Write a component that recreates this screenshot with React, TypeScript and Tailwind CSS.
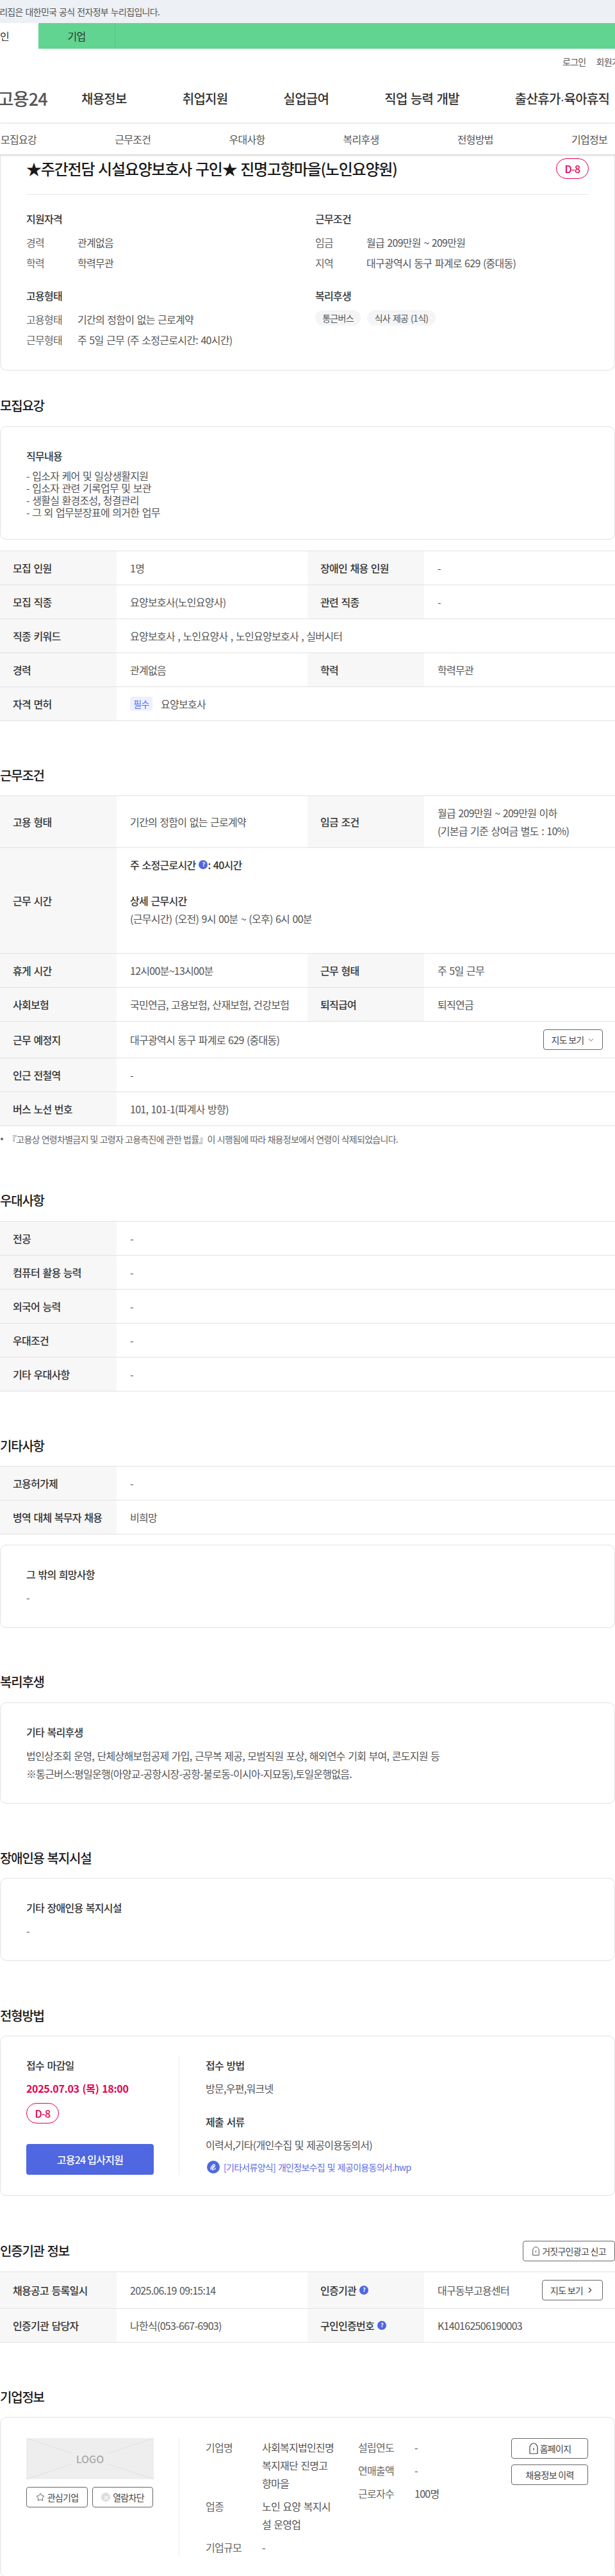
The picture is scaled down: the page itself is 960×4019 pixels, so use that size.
import React from "react";
import { ChevronDown, ChevronRight, Star } from "lucide-react";

const Tbl = ({ children }: { children: React.ReactNode }) => (
  <div className="border-t border-[#e2e2e2]">{children}</div>
);

const Lab = ({ children }: { children: React.ReactNode }) => (
  <div className="w-[182px] shrink-0 self-stretch bg-[#f7f7f7] pl-[20px] flex items-center text-[16px] font-medium text-[#333]">
    {children}
  </div>
);

const Val = ({ children, w, className = "" }: { children?: React.ReactNode; w?: boolean; className?: string }) => (
  <div className={`${w ? "w-[298px] shrink-0" : "flex-1"} pl-[21px] text-[16px] text-[#555] ${className}`}>{children}</div>
);

const Row = ({ children, h = "h-[53px]" }: { children: React.ReactNode; h?: string }) => (
  <div className={`flex items-center border-b border-[#e2e2e2] ${h}`}>{children}</div>
);

const Row1 = ({ l, v }: { l: string; v: string }) => (
  <Row>
    <Lab>{l}</Lab>
    <Val>{v}</Val>
  </Row>
);

const Row2 = ({ a, b, c, d, h }: { a: React.ReactNode; b: React.ReactNode; c: React.ReactNode; d: React.ReactNode; h?: string }) => (
  <Row h={h}>
    <Lab>{a}</Lab>
    <Val w>{b}</Val>
    <Lab>{c}</Lab>
    <Val>{d}</Val>
  </Row>
);

const H2 = ({ children, className }: { children: React.ReactNode; className: string }) => (
  <h2 className={`h-[30px] flex items-center text-[20px] font-medium tracking-[-0.06em] text-[#1a1a1a] whitespace-nowrap ${className}`}>{children}</h2>
);

const Card = ({ children, className }: { children: React.ReactNode; className: string }) => (
  <div className={`rounded-[10px] border border-[#e2e2e2] pl-[40px] pr-[40px] ${className}`}>{children}</div>
);

const CardTitle = ({ children }: { children: React.ReactNode }) => (
  <div className="h-[24px] flex items-center text-[16px] font-medium text-[#333]">{children}</div>
);

const Help = () => (
  <span className="inline-flex items-center justify-center w-[14px] h-[14px] rounded-full bg-[#4f67e0] text-white text-[9px] font-bold ml-[5px] shrink-0">?</span>
);

const Bell = ({ cls }: { cls: string }) => (
  <svg viewBox="0 0 16 20" className={cls} fill="none" stroke="#444" strokeWidth="1.2">
    <path d="M2 18V8.500C2 5 5 2 8 2s6 3 6 6.500V18H2Z" strokeLinejoin="round" />
    <path d="M8 9v4" />
  </svg>
);

const Dday = ({ className = "" }: { className?: string }) => (
  <div className={`w-[51px] rounded-full border border-[#e6004f] text-[#e6004f] text-[16px] font-medium flex items-center justify-center ${className}`}>D-8</div>
);

const InfoRow = ({ l, v }: { l: string; v: string }) => (
  <div className="flex h-[24px] items-center text-[16px]">
    <span className="w-[80px] text-[#666]">{l}</span>
    <span className="text-[#555] whitespace-nowrap">{v}</span>
  </div>
);

const BtnBase = "border border-[#666] rounded-[4px] flex items-center justify-center text-[14px] text-[#444] whitespace-nowrap";

export default function App() {
  return (
    <div className="w-[960px] h-[4019px] overflow-hidden bg-white font-['Noto_Sans_CJK_KR','Noto_Sans',sans-serif] tracking-[-0.045em] [word-spacing:1.5px] text-[#444]">
      {/* gov bar */}
      <div className="h-[36px] bg-[#edf0f4] flex items-center overflow-hidden">
        <span className="ml-[-13px] text-[14px] text-[#555] whitespace-nowrap">누리집은 대한민국 공식 전자정부 누리집입니다.</span>
      </div>
      {/* green bar */}
      <div className="h-[40px] bg-[#61d491] flex overflow-hidden">
        <div className="w-[60px] bg-white flex items-center justify-end pr-[46px] text-[16px] text-[#333] whitespace-nowrap">개인</div>
        <div className="w-[120px] border-r border-[#55c585] flex items-center justify-center text-[16px] text-[#333]">기업</div>
      </div>
      {/* login */}
      <div className="h-[40px] flex items-center pl-[878px] gap-[16px] overflow-hidden text-[14px] text-[#555] whitespace-nowrap">
        <span>로그인</span>
        <span>회원가입</span>
      </div>
      {/* logo / nav */}
      <div className="h-[76px] flex items-center overflow-hidden whitespace-nowrap">
        <div className="w-[127px] shrink-0 flex justify-end pr-[53px] text-[27px] font-medium text-[#555]">고용24</div>
        <div className="flex gap-[87px] text-[20px] font-medium text-[#333]">
          <span>채용정보</span>
          <span>취업지원</span>
          <span>실업급여</span>
          <span>직업 능력 개발</span>
          <span>
            출산휴가<span className="font-['Liberation_Sans']">·</span>육아휴직
          </span>
        </div>
      </div>
      {/* tabs */}
      <div className="relative z-10 h-[49px] border-t border-[#e5e5e5] bg-white shadow-[0_1px_3px_rgba(0,0,0,0.25)] flex items-center justify-between pl-[1px] pr-[12px] text-[16px] text-[#555]">
        <span>모집요강</span>
        <span>근무조건</span>
        <span>우대사항</span>
        <span>복리후생</span>
        <span>전형방법</span>
        <span>기업정보</span>
      </div>

      {/* summary card */}
      <div className="rounded-b-[10px] border-x border-b border-[#e2e2e2] pl-[40px] pr-[40px] pt-[6px] pb-[35px]">
        <div className="flex items-center justify-between h-[32px]">
          <div className="text-[24px] font-medium tracking-[-0.05em] text-[#1a1a1a] whitespace-nowrap">★주간전담 시설요양보호사 구인★ 진명고향마을(노인요양원)</div>
          <Dday className="h-[32px]" />
        </div>
        <div className="mt-[24px] border-t border-[#e8e8e8]" />
        <div className="mt-[25px] grid grid-cols-[451px_1fr]">
          <div>
            <CardTitle>지원자격</CardTitle>
            <div className="mt-[13px] flex flex-col gap-[8px]">
              <InfoRow l="경력" v="관계없음" />
              <InfoRow l="학력" v="학력무관" />
            </div>
          </div>
          <div>
            <CardTitle>근무조건</CardTitle>
            <div className="mt-[13px] flex flex-col gap-[8px]">
              <InfoRow l="임금" v="월급 209만원 ~ 209만원" />
              <InfoRow l="지역" v="대구광역시 동구 파계로 629 (중대동)" />
            </div>
          </div>
          <div className="mt-[27px]">
            <CardTitle>고용형태</CardTitle>
            <div className="mt-[13px] flex flex-col gap-[8px]">
              <InfoRow l="고용형태" v="기간의 정함이 없는 근로계약" />
              <InfoRow l="근무형태" v="주 5일 근무 (주 소정근로시간: 40시간)" />
            </div>
          </div>
          <div className="mt-[27px]">
            <CardTitle>복리후생</CardTitle>
            <div className="mt-[11px] flex gap-[10px] text-[14px] text-[#555]">
              <span className="h-[24px] w-[71px] rounded-full bg-[#f4f5f6] flex items-center justify-center">통근버스</span>
              <span className="h-[24px] w-[107px] rounded-full bg-[#f4f5f6] flex items-center justify-center">식사 제공 (1식)</span>
            </div>
          </div>
        </div>
      </div>

      {/* 모집요강 */}
      <H2 className="mt-[40px]">모집요강</H2>
      <Card className="mt-[17px] pt-[33px] pb-[32px]">
        <CardTitle>직무내용</CardTitle>
        <div className="mt-[10px] text-[16px] leading-[19px] text-[#555]">
          <div>- 입소자 케어 및 일상생활지원</div>
          <div>- 입소자 관련 기록업무 및 보관</div>
          <div>- 생활실 환경조성, 청결관리</div>
          <div>- 그 외 업무분장표에 의거한 업무</div>
        </div>
      </Card>
      <div className="mt-[17px]">
        <Tbl>
          <Row2 a="모집 인원" b="1명" c="장애인 채용 인원" d="-" />
          <Row2 a="모집 직종" b="요양보호사(노인요양사)" c="관련 직종" d="-" />
          <Row1 l="직종 키워드" v="요양보호사 , 노인요양사 , 노인요양보호사 , 실버시터" />
          <Row2 a="경력" b="관계없음" c="학력" d="학력무관" />
          <Row>
            <Lab>자격 면허</Lab>
            <Val className="flex items-center">
              <span className="w-[35px] h-[22px] rounded-[3px] bg-[#eef0ff] text-[#5a6ee8] text-[14px] flex items-center justify-center">필수</span>
              <span className="ml-[13px]">요양보호사</span>
            </Val>
          </Row>
        </Tbl>
      </div>

      {/* 근무조건 */}
      <H2 className="mt-[70px]">근무조건</H2>
      <div className="mt-[16px]">
        <Tbl>
          <Row2
            h="h-[81px]"
            a="고용 형태"
            b="기간의 정함이 없는 근로계약"
            c="임금 조건"
            d={
              <div className="leading-[28px]">
                <div>월급 209만원 ~ 209만원 이하</div>
                <div>(기본급 기준 상여금 별도 : 10%)</div>
              </div>
            }
          />
          <Row h="h-[165px]">
            <Lab>근무 시간</Lab>
            <Val className="self-start pt-[12px] leading-[28px]">
              <div className="font-medium text-[#333] flex items-center">주 소정근로시간<Help />: 40시간</div>
              <div className="mt-[28px] font-medium text-[#333]">상세 근무시간</div>
              <div>(근무시간) (오전) 9시 00분 ~ (오후) 6시 00분</div>
            </Val>
          </Row>
          <Row2 a="휴게 시간" b="12시00분~13시00분" c="근무 형태" d="주 5일 근무" />
          <Row2 a="사회보험" b="국민연금, 고용보험, 산재보험, 건강보험" c="퇴직급여" d="퇴직연금" />
          <Row h="h-[57px]">
            <Lab>근무 예정지</Lab>
            <Val>대구광역시 동구 파계로 629 (중대동)</Val>
            <button className={`${BtnBase} w-[93px] h-[32px] mr-[19px] gap-[4px]`}>
              지도 보기 <ChevronDown size={13} strokeWidth={1.5} />
            </button>
          </Row>
          <Row1 l="인근 전철역" v="-" />
          <Row1 l="버스 노선 번호" v="101, 101-1(파계사 방향)" />
        </Tbl>
      </div>
      <div className="mt-[10px] h-[20px] flex items-center text-[14px] text-[#666] whitespace-nowrap [word-spacing:0.5px]">
        <span className="w-[4px] h-[4px] rounded-full bg-[#666] ml-[1px] mr-[7px]" />
        『고용상 연령차별금지 및 고령자 고용촉진에 관한 법률』이 시행됨에 따라 채용정보에서 연령이 삭제되었습니다.
      </div>

      {/* 우대사항 */}
      <H2 className="mt-[71px]">우대사항</H2>
      <div className="mt-[17px]">
        <Tbl>
          <Row1 l="전공" v="-" />
          <Row1 l="컴퓨터 활용 능력" v="-" />
          <Row1 l="외국어 능력" v="-" />
          <Row1 l="우대조건" v="-" />
          <Row1 l="기타 우대사항" v="-" />
        </Tbl>
      </div>

      {/* 기타사항 */}
      <H2 className="mt-[70px]">기타사항</H2>
      <div className="mt-[16px]">
        <Tbl>
          <Row1 l="고용허가제" v="-" />
          <Row1 l="병역 대체 복무자 채용" v="비희망" />
        </Tbl>
      </div>
      <Card className="mt-[16px] pt-[33px] pb-[35px]">
        <CardTitle>그 밖의 희망사항</CardTitle>
        <div className="mt-[12px] h-[24px] flex items-center text-[16px] text-[#555]">-</div>
      </Card>

      {/* 복리후생 */}
      <H2 className="mt-[69px]">복리후생</H2>
      <Card className="mt-[17px] pt-[33px] pb-[32px]">
        <CardTitle>기타 복리후생</CardTitle>
        <div className="mt-[11px] text-[16px] leading-[28px] text-[#555]">
          <div>법인상조회 운영, 단체상해보험공제 가입, 근무복 제공, 모범직원 포상, 해외연수 기회 부여, 콘도지원 등</div>
          <div>※통근버스:평일운행(아양교-공항시장-공항-불로동-이시아-지묘동),토일운행없음.</div>
        </div>
      </Card>

      {/* 장애인용 복지시설 */}
      <H2 className="mt-[70px]">장애인용 복지시설</H2>
      <Card className="mt-[16px] pt-[33px] pb-[34px]">
        <CardTitle>기타 장애인용 복지시설</CardTitle>
        <div className="mt-[12px] h-[24px] flex items-center text-[16px] text-[#555]">-</div>
      </Card>

      {/* 전형방법 */}
      <H2 className="mt-[71px]">전형방법</H2>
      <Card className="mt-[16px] pt-[32px] pb-[32px] flex">
        <div className="w-[239px] shrink-0 h-[184px] border-r border-[#ececec] pr-[40px] flex flex-col">
          <div className="mt-[1px]"><CardTitle>접수 마감일</CardTitle></div>
          <div className="mt-[12px] h-[24px] flex items-center text-[16px] font-semibold tracking-[-0.02em] text-[#e6004f] whitespace-nowrap">2025.07.03 (목) 18:00</div>
          <Dday className="mt-[11px] h-[32px]" />
          <button className="mt-[32px] w-[199px] h-[48px] rounded-[4px] bg-[#4f67e0] text-white text-[16px] font-medium flex items-center justify-center">고용24 입사지원</button>
        </div>
        <div className="pl-[41px]">
          <div className="mt-[1px]"><CardTitle>접수 방법</CardTitle></div>
          <div className="mt-[12px] h-[24px] flex items-center text-[16px] text-[#555]">방문,우편,워크넷</div>
          <div className="mt-[28px]"><CardTitle>제출 서류</CardTitle></div>
          <div className="mt-[12px] h-[24px] flex items-center text-[16px] text-[#555]">이력서,기타(개인수집 및 제공이용동의서)</div>
          <div className="mt-[11px] h-[24px] flex items-center text-[14px] text-[#5a6ee8] whitespace-nowrap">
            <svg viewBox="0 0 20 20" className="w-[20px] h-[20px] ml-[2px] mr-[6px] shrink-0">
              <circle cx="10" cy="10" r="10" fill="#4f67e0" />
              <path d="M7 14c-2-1-1-3 0-4.500l2.500-2.800c1.500-1.500 3.800 0 2.800 1.800l-2.800 3.700c-.8.900-1.900.1-1.300-.8l2.300-3M8.500 14.300c1.800.4 4-.8 5-2.600" fill="none" stroke="#fff" strokeWidth="1.300" strokeLinecap="round" />
            </svg>
            [기타서류양식] 개인정보수집 및 제공이용동의서.hwp
          </div>
        </div>
      </Card>

      {/* 인증기관 정보 */}
      <div className="mt-[70px] h-[32px] flex items-center justify-between">
        <h2 className="text-[20px] font-medium tracking-[-0.06em] text-[#1a1a1a]">인증기관 정보</h2>
        <button className={`${BtnBase} w-[144px] h-[32px] gap-[3px]`}>
          <Bell cls="w-[13px] h-[16px]" />
          거짓구인광고 신고
        </button>
      </div>
      <div className="mt-[16px]">
        <Tbl>
          <Row2
            h="h-[57px]"
            a="채용공고 등록일시"
            b="2025.06.19 09:15:14"
            c={<span className="flex items-center">인증기관<Help /></span>}
            d={
              <div className="flex items-center justify-between pr-[19px]">
                <span>대구동부고용센터</span>
                <button className={`${BtnBase} w-[95px] h-[32px] gap-[4px]`}>
                  지도 보기 <ChevronRight size={14} strokeWidth={2} />
                </button>
              </div>
            }
          />
          <Row2
            a="인증기관 담당자"
            b="나한식(053-667-6903)"
            c={<span className="flex items-center">구인인증번호<Help /></span>}
            d="K140162506190003"
          />
        </Tbl>
      </div>

      {/* 기업정보 */}
      <H2 className="mt-[70px]">기업정보</H2>
      <Card className="mt-[16px] pt-[32px] h-[250px] flex">
        <div className="w-[239px] shrink-0 h-[184px] border-r border-[#ececec] pr-[40px]">
          <div className="relative w-[199px] h-[64px] bg-[#eeeeee] flex items-center justify-center overflow-hidden">
            <svg className="absolute inset-0 w-full h-full" viewBox="0 0 199 64" fill="none" stroke="#e0e0e0">
              <path d="M0 0 72 24M199 0 127 24M0 64 72 40M199 64 127 40" />
            </svg>
            <span className="text-[16px] font-medium text-[#aaa] tracking-normal">LOGO</span>
          </div>
          <div className="mt-[12px] flex justify-between">
            <button className={`${BtnBase} w-[96px] h-[32px] gap-[4px]`}>
              <Star size={14} strokeWidth={1.5} /> 관심기업
            </button>
            <button className={`${BtnBase} w-[95px] h-[32px] gap-[4px]`}>
              <span className="w-[14px] h-[14px] rounded-full bg-[#ddd] text-white text-[11px] leading-none flex items-center justify-center">✕</span>
              열람차단
            </button>
          </div>
        </div>
        <div className="pl-[41px] w-[279px] shrink-0 text-[16px] leading-[28px]">
          <div className="flex">
            <span className="w-[88px] shrink-0 text-[#666]">기업명</span>
            <span className="w-[113px] break-all text-[#555]">사회복지법인진명복지재단 진명고향마을</span>
          </div>
          <div className="flex mt-[8px]">
            <span className="w-[88px] shrink-0 text-[#666]">업종</span>
            <span className="w-[113px] break-all text-[#555]">노인 요양 복지시설 운영업</span>
          </div>
          <div className="flex mt-[8px]">
            <span className="w-[88px] shrink-0 text-[#666]">기업규모</span>
            <span className="text-[#555]">-</span>
          </div>
        </div>
        <div className="w-[239px] shrink-0 text-[16px] leading-[28px]">
          <div className="flex">
            <span className="w-[88px] text-[#666]">설립연도</span>
            <span className="text-[#555]">-</span>
          </div>
          <div className="flex mt-[8px]">
            <span className="w-[88px] text-[#666]">연매출액</span>
            <span className="text-[#555]">-</span>
          </div>
          <div className="flex mt-[8px]">
            <span className="w-[88px] text-[#666]">근로자수</span>
            <span className="text-[#555]">100명</span>
          </div>
        </div>
        <div className="flex flex-col gap-[9px]">
          <button className={`${BtnBase} w-[120px] h-[32px] gap-[2px]`}>
            <Bell cls="w-[16px] h-[20px]" />
            홈페이지
          </button>
          <button className={`${BtnBase} w-[120px] h-[32px]`}>채용정보 이력</button>
        </div>
      </Card>
    </div>
  );
}
